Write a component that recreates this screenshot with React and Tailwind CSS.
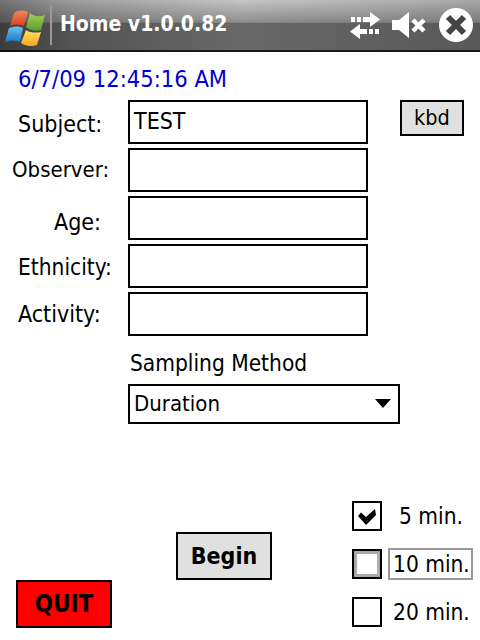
import React from 'react';

const ui = "font-['DejaVu_Sans_Condensed','DejaVu_Sans',sans-serif]";

function WinLogo() {
  return (
    <svg width="48" height="48" viewBox="0 0 48 48" className="shrink-0">
      <defs>
        <linearGradient id="red" x1="0" y1="0" x2="0" y2="1"><stop offset="0" stopColor="#f0895a" /><stop offset="1" stopColor="#d8401c" /></linearGradient>
        <linearGradient id="green" x1="0" y1="0" x2="0" y2="1"><stop offset="0" stopColor="#a6cf5c" /><stop offset="1" stopColor="#5c9e2c" /></linearGradient>
        <linearGradient id="blue" x1="0" y1="0" x2="0" y2="1"><stop offset="0" stopColor="#6cc0ee" /><stop offset="1" stopColor="#1a78c8" /></linearGradient>
        <linearGradient id="yellow" x1="0" y1="0" x2="0" y2="1"><stop offset="0" stopColor="#fde06a" /><stop offset="1" stopColor="#f5a81c" /></linearGradient>
      </defs>
      <path d="M14 11 C18 8 23 8 28 10 L24 24 C19 22 14 22 10 24 Z" fill="url(#red)" />
      <path d="M30 11 C34 15 40 15 45 13 L41 28 C35 30 30 28 26 25 Z" fill="url(#green)" />
      <path d="M9 26 C14 24 19 24 23 26 L20 40 C15 38 10 38 5 40 Z" fill="url(#blue)" />
      <path d="M26 28 C30 31 36 31 41 30 L37 43 C31 45 25 44 21 41 Z" fill="url(#yellow)" />
    </svg>
  );
}

function TitleBar() {
  return (
    <div className="h-[52px] flex items-center text-white bg-[linear-gradient(to_right,rgba(0,0,0,0.42)_0%,rgba(0,0,0,0.2)_15%,rgba(0,0,0,0)_50%,rgba(0,0,0,0.15)_100%),linear-gradient(to_bottom,#c6c6c6_0%,#8e8e8e_43%,#686868_44%,#686868_96%,#1a1a1a_96%,#1a1a1a_100%)]">
      <WinLogo />
      <div className="w-[2px] h-[40px] ml-[2px] mb-[2px] bg-[#9a9a9a]" />
      <span className="ml-[8px] mb-[3px] text-[21px] font-bold leading-none">Home v1.0.0.82</span>
      <div className="ml-auto flex items-center mb-[3px]">
        <svg width="32" height="30" viewBox="0 0 32 30" fill="white">
          <rect x="2" y="7" width="4" height="5" />
          <rect x="8" y="7" width="4" height="5" />
          <path d="M14 7 H21 V2 L31 9.5 L21 17 V12 H14 Z" />
          <path d="M1 21.5 L11 14 V19 H18 V24 H11 V29 Z" />
          <rect x="20" y="19" width="4" height="5" />
          <rect x="26" y="19" width="4" height="5" />
        </svg>
        <svg width="34" height="26" viewBox="0 0 34 26" fill="white" className="ml-[11px]">
          <path d="M0 8 H7 L17 0 V26 L7 18 H0 Z" />
          <path d="M21 8 L32 19 M32 8 L21 19" stroke="white" strokeWidth="4.5" />
        </svg>
        <div className="ml-[13px] mr-[7px] w-[34px] h-[34px] rounded-full bg-white flex items-center justify-center">
          <svg width="22" height="22" viewBox="0 0 22 22">
            <path d="M3 3 L19 19 M19 3 L3 19" stroke="#444" strokeWidth="6" />
          </svg>
        </div>
      </div>
    </div>
  );
}

function Field({ label, offset, value }) {
  return (
    <div className="flex h-[48px]">
      <div className={`w-[128px] h-[44px] leading-[44px] text-black ${offset}`}>{label}</div>
      <div className="w-[240px] h-[44px] border-2 border-black pl-[4px] text-[23px] leading-[38px]">{value}</div>
    </div>
  );
}

function Check({ checked, focused }) {
  return (
    <div className="w-[30px] h-[30px] border-2 border-black flex items-center justify-center">
      {focused && <div className="w-full h-full border-[3px] border-[#aaa]" />}
      {checked && (
        <svg width="20" height="18" viewBox="0 0 20 18" className="shrink-0">
          <path d="M1 9 L4 5.5 L9 10 L18 2 L19 8 L9 18 Z" fill="black" />
        </svg>
      )}
    </div>
  );
}

export default function App() {
  return (
    <div className={`${ui} w-[480px] h-[640px] bg-white overflow-hidden text-black`}>
      <TitleBar />
      <div className="pl-[18px] pt-[15px] h-[48px] text-[23.5px] leading-[24px] text-[#0000d0]">6/7/09 12:45:16 AM</div>

      <div className="relative">
        <Field label="Subject:" offset="text-[23px] pl-[18px] pt-[2px]" value="TEST" />
        <Field label="Observer:" offset="text-[22px] pl-[12px]" />
        <Field label="Age:" offset="text-[23px] pl-[54px] pt-[4px]" />
        <Field label="Ethnicity:" offset="text-[22.5px] pl-[18px] pt-[1px]" />
        <Field label="Activity:" offset="text-[23px] pl-[18px]" />
        <button className="absolute left-[400px] top-0 w-[64px] h-[36px] border-2 border-black bg-[#e0e0e0] text-[21.5px] leading-none">kbd</button>
      </div>

      <div className="pl-[130px] h-[44px] pt-[8px] text-[22.5px] leading-[30px]">Sampling Method</div>
      <div className="ml-[128px] w-[272px] h-[40px] border-2 border-black flex items-center justify-between pl-[4px] pr-[7px] pb-[2px] text-[22px]">
        <span>Duration</span>
        <svg width="16" height="9" viewBox="0 0 16 9"><path d="M0 0 H16 L8 9 Z" fill="black" /></svg>
      </div>

      <div className="flex mt-[76px]">
        <button className="ml-[16px] mt-[80px] w-[96px] h-[48px] border-2 border-black bg-[#ff0000] text-[24px] font-bold">QUIT</button>
        <button className="ml-[64px] mt-[32px] w-[96px] h-[48px] border-2 border-black bg-[#e0e0e0] text-[23px] font-bold">Begin</button>
        <div className="ml-[80px] flex flex-col gap-[18px] pt-[1px]">
          <div className="flex items-center h-[30px]">
            <Check checked />
            <span className="ml-[17px] pt-[1px] text-[22.5px]">5 min.</span>
          </div>
          <div className="flex items-center h-[30px]">
            <Check focused />
            <span className="ml-[6px] w-[85px] h-[32px] border-2 border-[#999] pl-[3px] text-[22.5px] leading-[28px]">10 min.</span>
          </div>
          <div className="flex items-center h-[30px]">
            <Check />
            <span className="ml-[11px] pt-[1px] text-[22.5px]">20 min.</span>
          </div>
        </div>
      </div>
    </div>
  );
}
